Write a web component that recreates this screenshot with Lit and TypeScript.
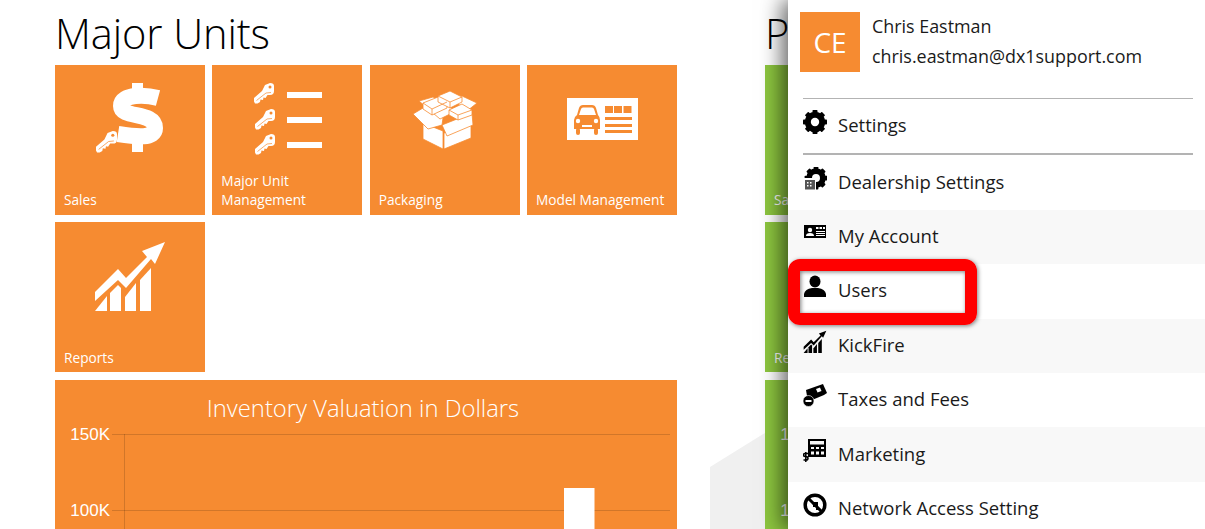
import { LitElement, css, html, svg } from "lit";
import { customElement } from "lit/decorators.js";

// key drawn head top right, sits in a 20x20 box
const key = (x: number, y: number, s = 1) => svg`
  <g transform="translate(${x} ${y}) scale(${s})">
    <path fill="#fff" d="M11 2 L16 0 Q20 0 20 3 L20 8 Q20 12 16 12 L13.500 12 L11.500 15 L9.500 14.500 L9 17 L6.500 16.500 L6 19 L3.500 20.500 L1 20.500 L0 18.500 L0 15 L8 8 Z"/>
    <circle cx="16" cy="4" r="1.500" fill="#f68b31"/>
    <path d="M2.500 17.500 L12 10 L17 9.500" fill="none" stroke="#f68b31" stroke-width=".7"/>
  </g>`;

const salesIcon = svg`<svg class="art" viewBox="0 0 150 150">
  <path fill="none" stroke="#fff" stroke-width="16" d="M103 33 C92 30 66 28 66 41 C66 54 100 46 100 63 C100 74 82 72 63 69"/>
  <rect x="77" y="18" width="11" height="10" fill="#fff"/>
  <rect x="77" y="76" width="11" height="11" fill="#fff"/>
  <path d="M62 62 L60 80" stroke="#f68b31" stroke-width="1.500"/>
  ${key(41, 66, 1.05)}
</svg>`;

const unitsIcon = svg`<svg class="art" viewBox="0 0 150 150">
  ${key(42, 18)}${key(43, 44)}${key(43, 69)}
  <rect x="75" y="27" width="35" height="6" fill="#fff"/>
  <rect x="75" y="52" width="35" height="6" fill="#fff"/>
  <rect x="75" y="77" width="35" height="6" fill="#fff"/>
</svg>`;

const packagingIcon = svg`<svg class="art" viewBox="0 0 150 150">
  <g fill="#fff" stroke="#f68b31" stroke-width=".8">
    <path d="M53 58 L73 66 L73 84 L53 74 Z"/>
    <path d="M74 68 L101 58 L101 73 L74 84 Z"/>
    <path d="M43 49 L53 43 L73 53 L72 60 L58 64 Z"/>
    <path d="M72 60 L102 48 L103 60 L77 71 Z"/>
    <path d="M49 36 L63 32 L86 46 L70 54 Z"/>
    <path d="M77 30 L92 31 L107 38 L97 46 Z"/>
    <path d="M53 38 L68 32 L77 37 L77 43 L62 50 L53 44 Z"/>
    <path d="M68 31 L80 26 L92 32 L92 37 L80 43 L68 37 Z"/>
    <path d="M79 45 L92 39 L102 45 L102 50 L88 55 L79 50 Z"/>
  </g>
  <g fill="none" stroke="#f68b31" stroke-width=".8">
    <path d="M53 38 L62 44 L77 37 M62 44 L62 50"/>
    <path d="M68 31 L80 37 L92 32 M80 37 L80 43"/>
    <path d="M79 45 L88 50 L102 45 M88 50 L88 55"/>
  </g>
</svg>`;

const modelIcon = svg`<svg class="art" viewBox="0 0 150 150">
  <rect x="40" y="33" width="71" height="42" fill="#fff"/>
  <g fill="#f68b31">
    <path d="M50 50 L52 43 Q53 40 56 40 L65 40 Q68 40 69 43 L71 50 Q73 52 73 55 L73 64 L47 64 L47 55 Q47 52 50 50 Z"/>
    <rect x="49" y="63" width="4" height="7" rx="2"/>
    <rect x="67" y="63" width="4" height="7" rx="2"/>
    <rect x="78" y="41" width="8" height="7"/><rect x="87" y="41" width="8" height="7"/><rect x="96.500" y="41" width="8" height="7"/>
    <rect x="78" y="52" width="27" height="3"/><rect x="78" y="59" width="27" height="3"/><rect x="78" y="65" width="27" height="3"/>
  </g>
  <g fill="#fff">
    <path d="M52 50 L54 44 Q54.500 42.500 56 42.500 L65 42.500 Q66.500 42.500 67 44 L69 50 Z"/>
    <circle cx="51" cy="56" r="2.200"/><circle cx="69" cy="56" r="2.200"/>
    <rect x="55" y="60" width="10" height="2"/>
  </g>
</svg>`;

const trend = svg`
  <path d="M40 70 L63 47 L71 56 L92 35 L87 29 L110 20 L100 42 L96 37 L71 66 L63 58 L40 79 Z"/>
  <path d="M40 89 L52 74 L52 89 Z"/>
  <path d="M55 71 L63 63 L66 66 L66 89 L55 89 Z"/>
  <path d="M70 75 L81 61 L81 89 L70 89 Z"/>
  <path d="M85 58 L96 46 L96 89 L85 89 Z"/>`;

const reportsIcon = svg`<svg class="art" viewBox="0 0 150 150"><g fill="#fff">${trend}</g></svg>`;

const gear = (x = 12, y = 12, r = 1) => svg`
  <g transform="translate(${x} ${y}) scale(${r})">
    <circle r="7.500" fill="none" stroke="#000" stroke-width="5.500"/>
    ${[0, 45, 90, 135].map(
      (a) => svg`<rect x="-2.500" y="-12" width="5" height="24" rx=".8" transform="rotate(${a})"/>`
    )}
    <circle r="4.200" fill="#fff"/>
  </g>`;

const settingsIcon = svg`<svg class="ico" viewBox="0 0 24 24">${gear()}</svg>`;

const dealerIcon = svg`<svg class="ico" viewBox="0 0 24 24">
  ${gear(13, 11, 0.95)}
  <rect x="1" y="11" width="12" height="12" fill="#fff"/>
  <rect x="2" y="13" width="10" height="9.500" fill="#555"/>
  <path d="M4 15h1.500v1.500H4zM7 15h1.500v1.500H7zM4 18h1.500v1.500H4zM7 18h1.500v1.500H7z" fill="#fff"/>
</svg>`;

const accountIcon = svg`<svg class="ico" viewBox="0 0 24 24">
  <rect x="1" y="4" width="22" height="13" fill="#000"/>
  <circle cx="7" cy="9" r="2.200" fill="#fff"/>
  <path d="M3 15 Q3 12 7 12 Q11 12 11 15 Z" fill="#fff"/>
  <path d="M13 6h2.500v2H13zM16.500 6H19v2h-2.500zM20 6h2v2h-2zM13 10h9v1h-9zM13 12h9v1h-9zM13 14h9v1h-9z" fill="#fff"/>
</svg>`;

const userIcon = svg`<svg class="ico" viewBox="0 0 24 24">
  <ellipse cx="12" cy="6.500" rx="5.500" ry="6"/>
  <path d="M1 22 L1 19 Q2 14 9 13 L15 13 Q22 14 23 19 L23 22 Z"/>
</svg>`;

const kickIcon = svg`<svg class="ico" viewBox="38 18 74 74">${trend}</svg>`;

const taxIcon = svg`<svg class="ico" viewBox="0 0 24 24">
  <path d="M3 6 L20 0 L24 9 L21 11 L9 16 L4 12 Z"/>
  <path d="M13 5 L17 3.500 L18.500 7 L14.500 8.500 Z" fill="#fff"/>
  <circle cx="5.500" cy="17" r="5.500" stroke="#fff" stroke-width=".6"/>
  <rect x="2.500" y="16" width="6" height="2" fill="#fff"/>
</svg>`;

const calcIcon = svg`<svg class="ico" viewBox="0 0 24 24">
  <path fill-rule="evenodd" d="M5 0H23V18H5ZM7 2V5.500H21V2ZM8 8V10H11V8ZM13 8V10H16V8ZM18 8V10H21V8ZM8 12.500V15.500H11V12.500ZM13 12.500V15.500H16V12.500ZM18 12.500V15.500H21V12.500Z"/>
  <path d="M5.500 14.500 H2 Q.5 14.500 .5 16 Q.5 17.500 2.500 17.500 Q5 17.500 5 19.200 Q5 21 3 21 H.5 M2.800 13 V23" fill="none" stroke="#000" stroke-width="1.500"/>
</svg>`;

const networkIcon = svg`<svg class="ico" viewBox="0 0 24 24">
  <circle cx="12" cy="12" r="9.800" fill="none" stroke="#000" stroke-width="3.500"/>
  <path d="M5 5 L19 19" stroke="#000" stroke-width="3"/>
  <path d="M10 9h5v8h-2v-3h-3z" fill="#000"/>
</svg>`;

const orangeTiles = [
  { label: "Sales", art: salesIcon },
  { label: "Major Unit Management", art: unitsIcon },
  { label: "Packaging", art: packagingIcon },
  { label: "Model Management", art: modelIcon },
  { label: "Reports", art: reportsIcon },
];

const menu = [
  { label: "Dealership Settings", icon: dealerIcon },
  { label: "My Account", icon: accountIcon },
  { label: "Users", icon: userIcon },
  { label: "KickFire", icon: kickIcon },
  { label: "Taxes and Fees", icon: taxIcon },
  { label: "Marketing", icon: calcIcon },
  { label: "Network Access Setting", icon: networkIcon },
];

@customElement("app-root")
export class AppRoot extends LitElement {
  static styles = css`
    :host {
      display: block;
      position: relative;
      width: 1205px;
      height: 529px;
      overflow: hidden;
      background: #fff;
      font-family: "Open Sans", "Noto Sans", sans-serif;
    }

    .backdrop {
      position: absolute;
      left: 710px;
      top: 433px;
      width: 60px;
      height: 96px;
      background: #f0f0f0;
      clip-path: polygon(0 34px, 55px 0, 100% 0, 100% 100%, 0 100%);
    }

    .page {
      position: relative;
      display: flex;
      gap: 88px;
      padding-left: 55px;
    }

    .column {
      flex: none;
      width: 622px;
    }

    h1 {
      margin: 0;
      height: 65px;
      font-size: 41.6px;
      font-weight: 300;
      line-height: 66px;
      letter-spacing: -0.1px;
      color: #000;
    }

    .tiles {
      display: grid;
      grid-template-columns: repeat(4, 150px);
      grid-auto-rows: 150px;
      gap: 7.33px;
    }

    .tile {
      display: grid;
      background: #f68b31;
      color: #fff;
      font-size: 13.7px;
      line-height: 19px;
    }

    .tile > * {
      grid-area: 1 / 1;
    }

    .art {
      display: block;
      width: 150px;
      height: 150px;
    }

    .tile span {
      align-self: end;
      padding: 0 8px 5.6px 9px;
    }

    .green .tile,
    .green .chart {
      background: #8dc63f;
    }

    .chart {
      height: 149px;
      margin-top: 8px;
      background: #f68b31;
      color: #fff;
      overflow: hidden;
    }

    .chart h2 {
      margin: 0;
      height: 44px;
      padding: 13px 6px 0 0;
      box-sizing: border-box;
      font-size: 23.8px;
      font-weight: 300;
      line-height: 30px;
      text-align: center;
    }

    .plot {
      display: block;
    }

    .plot text {
      font-family: "Liberation Sans", sans-serif;
      font-size: 17px;
      fill: #fff;
    }

    .panel {
      position: absolute;
      left: 788px;
      top: 0;
      width: 417px;
      height: 529px;
      overflow: hidden;
      background: #fff;
      box-shadow: -6px 0 20px rgba(0, 0, 0, 0.6);
      color: #1a1a1a;
      font-size: 18.5px;
    }

    .who {
      display: flex;
      gap: 12px;
      height: 98px;
      padding: 12px 0 0 12px;
      box-sizing: border-box;
    }

    .avatar {
      display: flex;
      align-items: center;
      justify-content: center;
      width: 60px;
      height: 60px;
      background: #f68b31;
      color: #fff;
      font-size: 28px;
    }

    .names {
      display: flex;
      flex-direction: column;
      gap: 5px;
      font-size: 17.9px;
      line-height: 25px;
      padding-top: 2px;
    }

    .rule {
      height: 1px;
      margin: 0 12px 0 15px;
      background: #b3b3b3;
    }

    .rule.thick {
      height: 2px;
    }

    .row {
      display: flex;
      align-items: center;
      gap: 11px;
      height: 54.4px;
      padding-left: 15px;
    }

    .row span {
      margin-top: -3px;
    }

    .rows .row:nth-child(even) {
      background: #f8f8f8;
    }

    .ico {
      flex: none;
      width: 24px;
      height: 24px;
      margin-top: -8px;
    }

    .callout {
      position: absolute;
      left: 788px;
      top: 259px;
      width: 165px;
      height: 42px;
      border: 12px solid #ff0000;
      border-radius: 12px;
      box-shadow: 1px 1px 4px rgba(0, 0, 0, 0.5), inset 1px 1px 4px rgba(0, 0, 0, 0.5);
    }
  `;

  private renderChart(title: string) {
    return html`<div class="chart">
      <h2>${title}</h2>
      <svg class="plot" width="622" height="105" viewBox="0 0 622 105">
        <path d="M57 10.500H615M57 86.500H615M69.500 10V105" stroke="#000" stroke-opacity=".15" fill="none"/>
        <rect x="509" y="64" width="30.500" height="41" fill="#fff"/>
        <text x="55" y="16" text-anchor="end">150K</text>
        <text x="55" y="92" text-anchor="end">100K</text>
      </svg>
    </div>`;
  }

  render() {
    return html`
      <div class="backdrop"></div>
      <div class="page">
        <section class="column">
          <h1>Major Units</h1>
          <div class="tiles">
            ${orangeTiles.map((t) => html`<div class="tile">${t.art}<span>${t.label}</span></div>`)}
          </div>
          ${this.renderChart("Inventory Valuation in Dollars")}
        </section>
        <section class="column green">
          <h1>P</h1>
          <div class="tiles">
            <div class="tile"><span>Sa</span></div>
            <div class="tile"></div>
            <div class="tile"></div>
            <div class="tile"></div>
            <div class="tile"><span>Re</span></div>
          </div>
          ${this.renderChart("")}
        </section>
      </div>
      <aside class="panel">
        <div class="who">
          <div class="avatar">CE</div>
          <div class="names">
            <span>Chris Eastman</span>
            <span>chris.eastman@dx1support.com</span>
          </div>
        </div>
        <div class="rule"></div>
        <div class="row">${settingsIcon}<span>Settings</span></div>
        <div class="rule thick"></div>
        <div class="rows">
          ${menu.map((m) => html`<div class="row">${m.icon}<span>${m.label}</span></div>`)}
        </div>
      </aside>
      <div class="callout"></div>
    `;
  }
}
